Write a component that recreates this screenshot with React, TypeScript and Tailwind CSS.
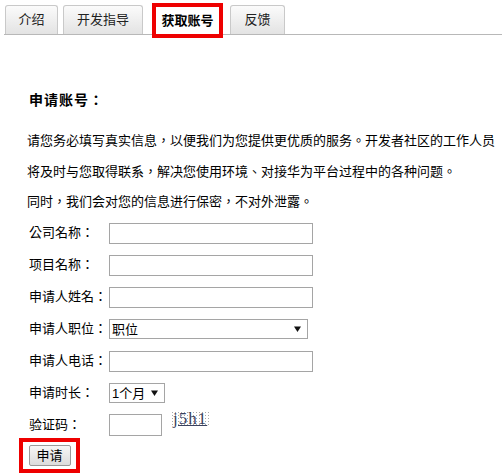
const tabBase =
  "h-[29px] flex items-center justify-center border border-b-0 border-[#c9c9c9] rounded-t-[3px] bg-gradient-to-b from-[#fbfbfb] to-[#e3e3e3] text-[13px] text-[#222]";

const Caret = () => (
  <svg
    className="pointer-events-none absolute top-1/2 -translate-y-1/2 right-[7px]"
    width="7"
    height="7"
    viewBox="0 0 7 7"
  >
    <path d="M0 1h7L3.5 6.5z" fill="#111" />
  </svg>
);

const Field = ({ label, children }: { label: string; children: React.ReactNode }) => (
  <div className="flex items-center h-[21px]">
    <span className="w-[80px] shrink-0 whitespace-nowrap">{label}</span>
    {children}
  </div>
);

const inputCls = "h-[21px] border border-[#a5a5a5] bg-white outline-none px-1 text-[13px]";

export default function App() {
  return (
    <div
      className="w-[502px] h-[476px] bg-white text-black text-[13px] overflow-hidden"
      style={{ fontFamily: '"Liberation Sans", "Noto Sans CJK TC", sans-serif' }}
    >
      {/* tab strip */}
      <div className="flex items-end h-[35px] border-b border-[#b8b8b8] ml-[4px]">
        <div className={`${tabBase} ml-[1px] w-[53px]`}>介绍</div>
        <div className={`${tabBase} ml-[5px] w-[80px]`}>开发指导</div>
        <div className="ml-[9px] mb-[-4px] w-[71px] h-[35px] border-[4px] border-[#ee0000] bg-white flex items-center justify-center font-bold text-[13px]">
          获取账号
        </div>
        <div className={`${tabBase} ml-[7px] w-[55px]`}>反馈</div>
      </div>

      <div className="pl-[29px] pt-[55px]">
        <h2 className="text-[14px] font-bold leading-[20px] tracking-[1px]">申请账号：</h2>
        <p className="mt-[16px] ml-[-2px] leading-[30.5px]">
          请您务必填写真实信息，以便我们为您提供更优质的服务。开发者社区的工作人员
          <br />
          将及时与您取得联系，解决您使用环境、对接华为平台过程中的各种问题。
          <br />
          同时，我们会对您的信息进行保密，不对外泄露。
        </p>

        <form className="mt-[5px] flex flex-col gap-[11px]">
          <Field label="公司名称：">
            <input className={`${inputCls} w-[204px]`} />
          </Field>
          <Field label="项目名称：">
            <input className={`${inputCls} w-[204px]`} />
          </Field>
          <Field label="申请人姓名：">
            <input className={`${inputCls} w-[204px]`} />
          </Field>
          <Field label="申请人职位：">
            <div className="relative">
              <select
                className="appearance-none w-[199px] h-[20px] border border-[#a5a5a5] bg-white pl-[2px] text-[13px] outline-none"
                defaultValue="职位"
              >
                <option>职位</option>
              </select>
              <Caret />
            </div>
          </Field>
          <Field label="申请人电话：">
            <input className={`${inputCls} w-[204px]`} />
          </Field>
          <Field label="申请时长：">
            <div className="relative">
              <select
                className="appearance-none w-[56px] h-[20px] border border-[#a5a5a5] bg-white pl-[2px] text-[13px] outline-none"
                defaultValue="1个月"
              >
                <option>1个月</option>
              </select>
              <Caret />
            </div>
          </Field>
          <Field label="验证码：">
            <input className={`${inputCls} w-[53px] h-[22px]`} />
            <span
              className="ml-[9px] mt-[-12px] px-[2px] leading-[16px] text-[17px] text-[#3a4260] underline decoration-[#3a4260] bg-[radial-gradient(#a8a8a8_0.6px,transparent_0.8px)] bg-[size:3px_3px] tracking-[1px]"
              style={{ fontFamily: '"Liberation Serif", serif' }}
            >
              j5h1
            </span>
          </Field>
        </form>

        <div className="ml-[-10px] mt-[2px] w-[61px] h-[35px] border-[4px] border-[#ee0000] flex items-center justify-center">
          <button
            type="button"
            className="w-[42px] h-[21px] border border-[#9a9a9a] rounded-[2px] bg-gradient-to-b from-[#f6f6f6] to-[#dcdcdc] text-[13px] leading-none"
          >
            申请
          </button>
        </div>
      </div>
    </div>
  );
}
